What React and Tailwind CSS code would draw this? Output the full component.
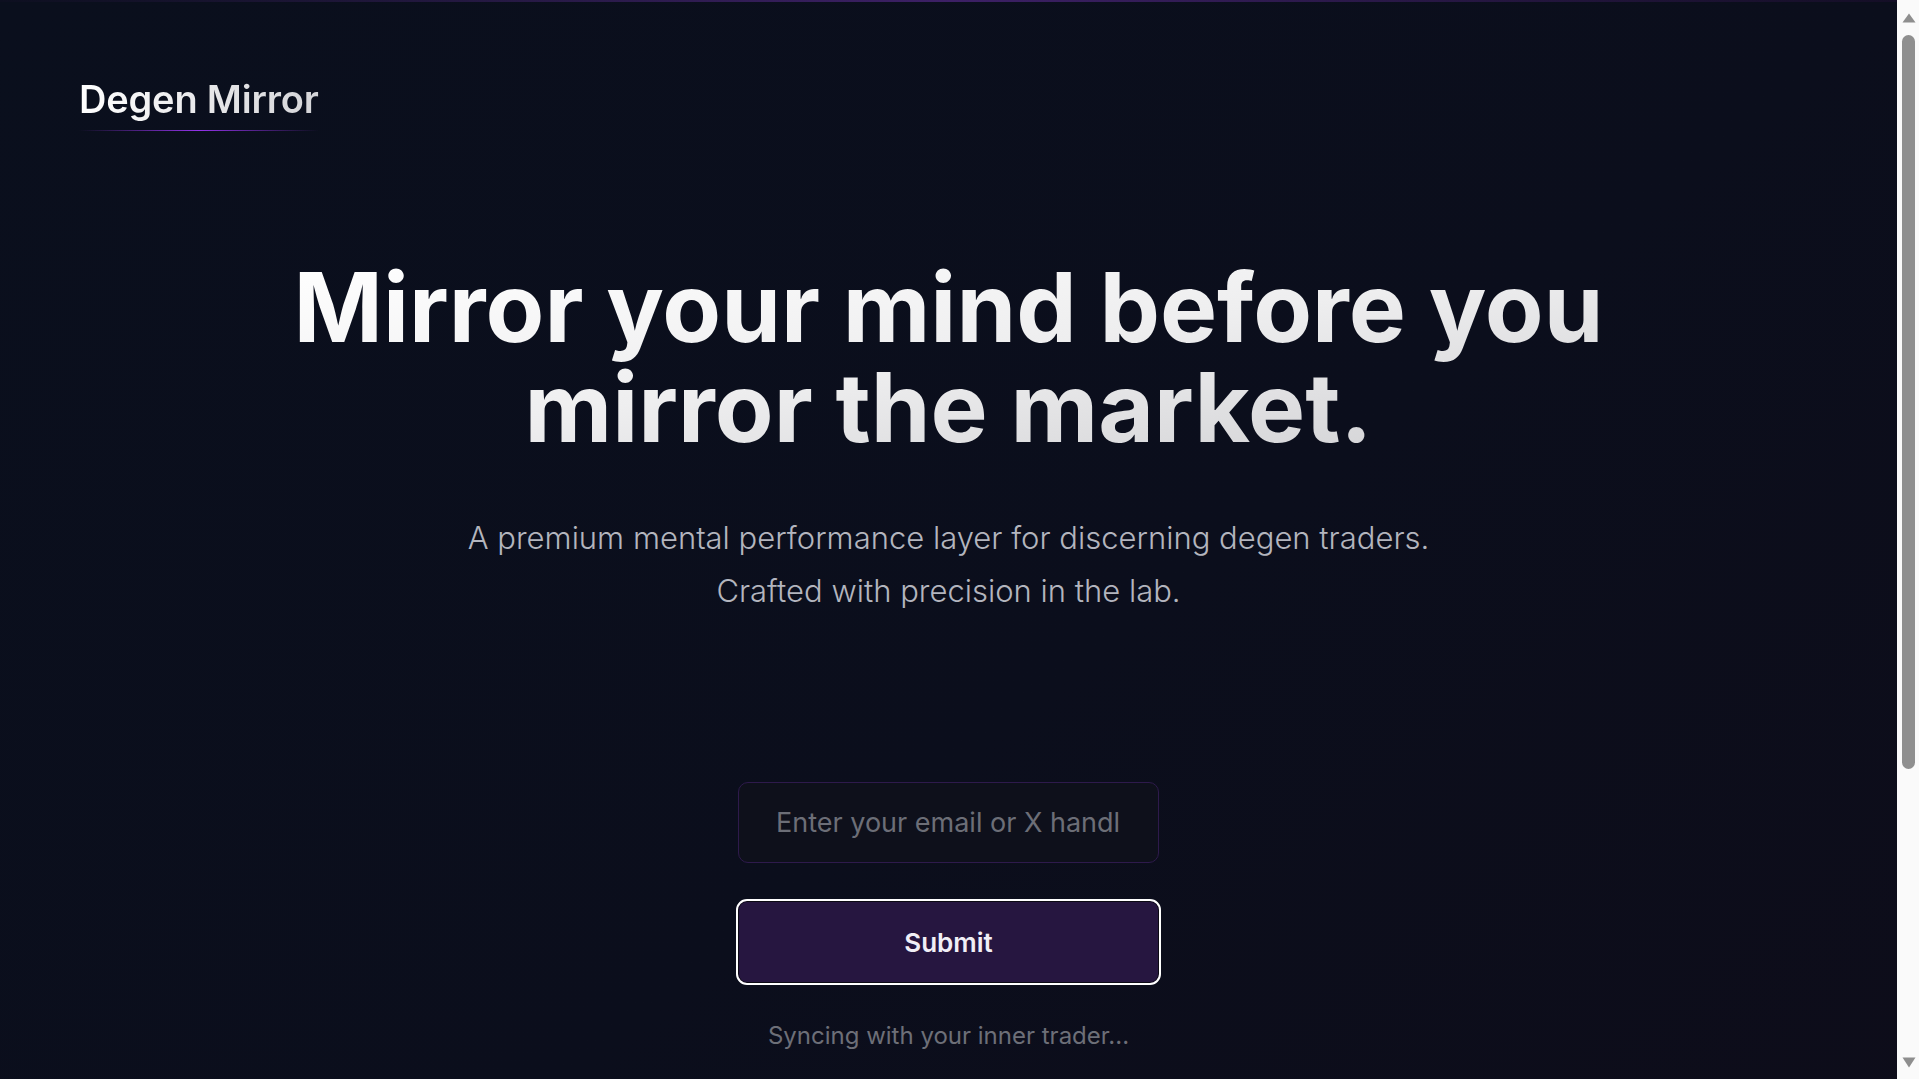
import React from "react";

function FakeScrollbar() {
  return (
    <div className="sticky top-0 flex h-screen w-[22px] shrink-0 flex-col bg-[#fafafa]">
      <div className="flex h-[35px] items-start justify-center pl-[1px] pt-[13px]">
        <svg width="14" height="10" viewBox="0 0 14 10">
          <path d="M7 0.5 L13.5 9.5 L0.5 9.5 Z" fill="#8e8e8e" />
        </svg>
      </div>
      <div className="ml-[5px] h-[734px] w-[13px] rounded-[7px] bg-[#8f8f8f]" />
      <div className="flex-1" />
      <div className="flex h-[22px] items-start justify-center pl-[1px]">
        <svg width="14" height="11" viewBox="0 0 14 11">
          <path d="M0.5 0.5 L13.5 0.5 L7 10.5 Z" fill="#8e8e8e" />
        </svg>
      </div>
    </div>
  );
}

export default function App() {
  return (
    <div className="flex w-full items-start bg-[#0b0e1b]" style={{ fontFamily: "Inter, 'Noto Sans', sans-serif" }}>
      <div className="relative min-h-[1525px] min-w-0 flex-1 bg-gradient-to-br from-[#0a0f1d] via-[#0b0e1c] to-[#0e0c19] text-white">
        <div className="absolute left-0 right-0 top-0 h-[2px] bg-gradient-to-r from-[#0d0f20] via-[#3d2066] to-[#140e26]" />
        <header className="px-[79px] pt-[74px]">
          <div className="inline-flex flex-col">
            <span className="bg-gradient-to-r from-white to-[#d4d4d8] bg-clip-text text-[38px] font-semibold leading-[50px] tracking-[-0.005em] text-transparent">
              Degen Mirror
            </span>
            <span className="mt-[6px] h-[1px] w-full bg-gradient-to-r from-transparent via-[#9333ea] to-transparent" />
          </div>
        </header>
        <main className="flex flex-col items-center px-8 pt-[126px]">
          <h1 className="bg-gradient-to-br from-white via-[#eeeeef] to-[#cfcfd2] bg-clip-text text-center text-[96px] font-bold leading-[100px] text-transparent">
            Mirror your mind before you
            <br />
            mirror the market.
          </h1>
          <p className="mt-[54px] text-center text-[31px] font-light leading-[53px] text-[#b3b5be]">
            A premium mental performance layer for discerning degen traders.
            <br />
            Crafted with precision in the lab.
          </p>
          <form className="mt-[165px] flex w-[421px] flex-col items-center" onSubmit={(e) => e.preventDefault()}>
            <input
              type="text"
              placeholder="Enter your email or X handle"
              className="h-[81px] w-full rounded-[10px] border border-[#2e1a4c] bg-[#0e101b] px-[37px] text-[27px] text-white placeholder:text-[#6c6e77] focus:outline-none"
            />
            <button
              type="submit"
              className="mt-[36px] h-[86px] w-[425px] rounded-[11px] border-2 border-white bg-[#261640] text-[26px] font-semibold text-[#f1eff6] shadow-[inset_0_0_0_1px_#0c0a14]"
            >
              Submit
            </button>
            <p className="mt-[33px] text-[24px] text-[#6d6f78]">Syncing with your inner trader...</p>
          </form>
        </main>
      </div>
      <FakeScrollbar />
    </div>
  );
}
